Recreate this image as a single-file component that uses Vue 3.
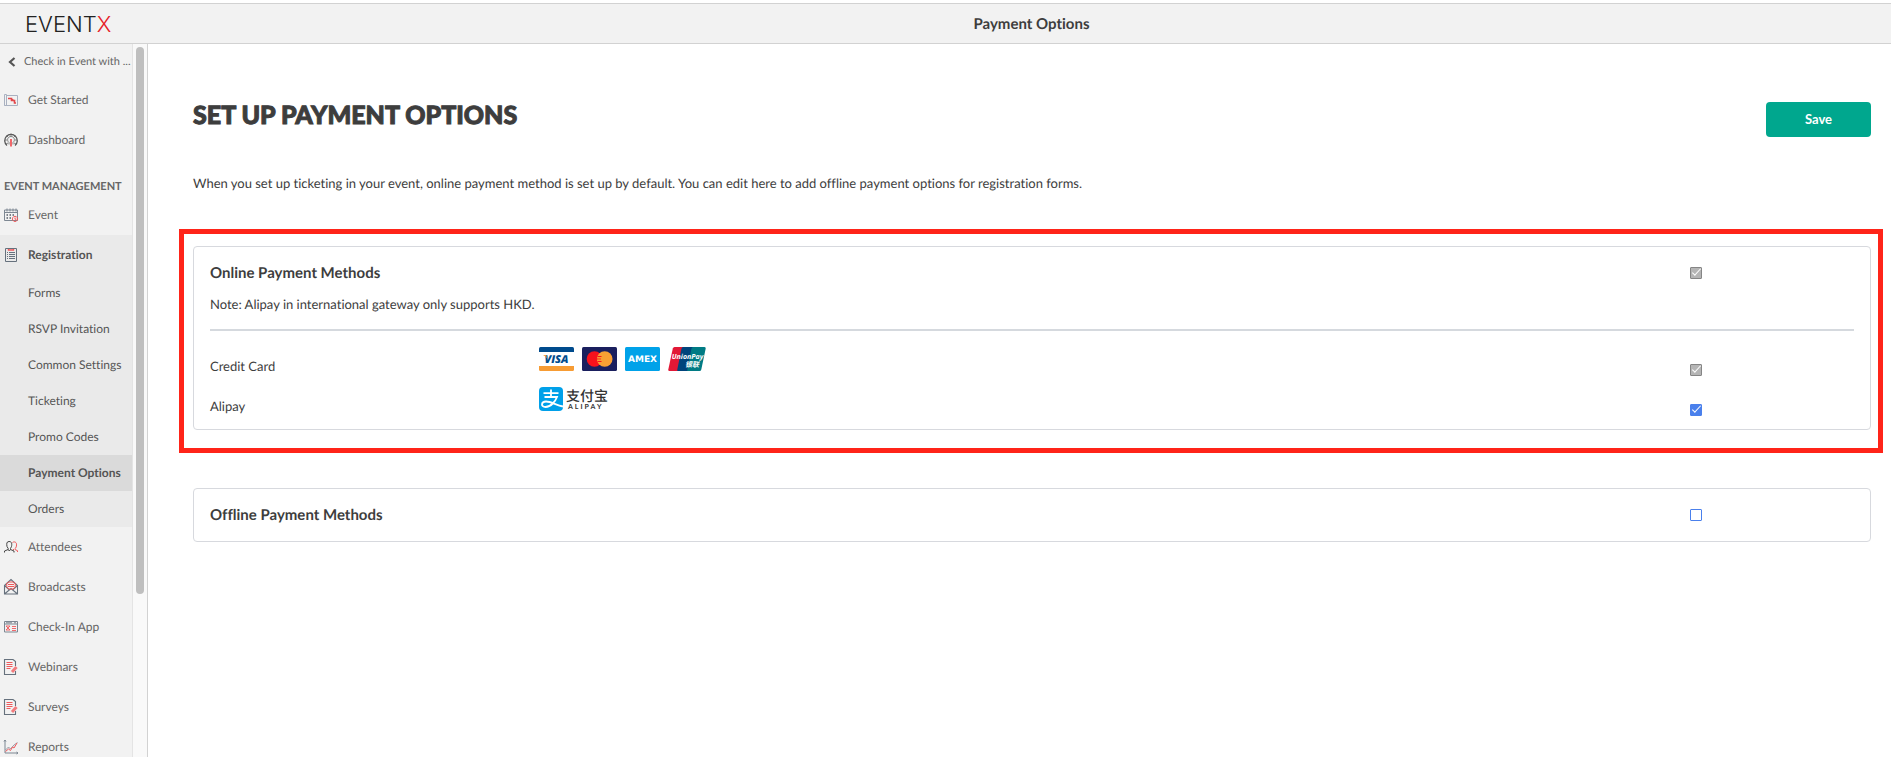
<script setup>
import { ref } from 'vue'

const credit = ref(true)
const online = ref(true)
const alipay = ref(true)
const offline = ref(false)

const topItems = [
  { icon: 'start', label: 'Get Started' },
  { icon: 'dash', label: 'Dashboard' },
]
const subItems = ['Forms', 'RSVP Invitation', 'Common Settings', 'Ticketing', 'Promo Codes', 'Payment Options', 'Orders']
const moreItems = [
  { icon: 'people', label: 'Attendees' },
  { icon: 'mail', label: 'Broadcasts' },
  { icon: 'app', label: 'Check-In App' },
  { icon: 'note', label: 'Webinars' },
  { icon: 'note', label: 'Surveys' },
  { icon: 'chart', label: 'Reports' },
]

const S = '#7d8792'
const R = '#f0595c'
const D = '#555'
const icons = {
  start: [
    { d: 'M.5 1.5h2v11h-2zM2.5 2.5h11v10h-13', c: '#a9b1c0' },
    { d: 'M4 5.500h3.500v2h3v2.500H12M8 6.500l3 2', c: '#e2474b', w: 1.6 },
  ],
  dash: [
    { d: 'M3 12.500A6.300 6.300 0 1 1 11 12.500', c: D, w: 1.3 },
    { d: 'M5 11.500V9.500C2.500 7.500 3.500 3.500 7 3.500s4.500 4 2 6v2M7 .5v2.500M1 7h2M11 7h2M2.500 2.500l1.500 1.500M11.500 2.500L10 4M2 11l2-1M12 11l-2-1', c: '#666', w: 0.8 },
    { d: 'M7 6v7.500', c: R, w: 1.8 },
  ],
  event: [
    { d: 'M.5 2h13v10.500H.5zM.5 4.500h13M3 .5v3M6 .5v3M9 .5v3M12 .5v3', c: S },
    { d: 'M2.500 7h1.500M5.500 7H7M8.500 7H10M2.500 10h1.500M5.500 10H7', c: '#555e68', w: 1.3 },
    { d: 'M11 8.300a2.600 2.600 0 1 0 .01 0zM11 9.500v1.700h1.500', c: R },
  ],
  form: [
    { d: 'M1.500.5h11v13h-11z', c: '#66717d' },
    { d: 'M3 4.500h1M5 4.500H11M3 6.500h1M5 6.500H11M3 8.500h1M5 8.500H11M3 10.500h1M5 10.500H11', c: '#66717d' },
    { d: 'M4.500 1v1h5V1M6 2h2', c: R, w: 1.4 },
  ],
  people: [
    { d: 'M8.500 2.500c2-1.500 4.500 0 4 2.500 0 1.500-.5 3-1.500 3.500v1l2.500 1.200v1.300M9 10l1-1', c: R },
    { d: 'M5 1.500C2.500 1.500 2.500 4 3 6.500l1.200 2v1L.5 11v1.500M5 1.500c3 0 3 2.500 2.500 5l-1 2v1L10 11v1.500M4.200 9.500L5.300 11l1.200-1.500', c: '#444' },
  ],
  mail: [
    { d: 'M.5 5.500L7-.5l6.500 6V14H.5zM.5 5.500L5 9.500M13.500 5.500L9 9.500M.5 14L7 8.500l6.500 5.500', c: '#66717d', w: 1.1 },
    { d: 'M3 7.500L2.500 3.500 5 2h4l2.500 1.500-.5 4-2 1.500H5zM4 4.500h6M4 6.500h6', c: R },
  ],
  app: [
    { d: 'M.5 1.500h13v10.500H.5zM.5 4h13M2 2.800h6M10 2.800h2', c: S },
    { d: 'M2 6l4 4M6 6l-4 4M2 6h4M2 10h4M8 6.500h4M8 8.500h4M8 10.500h4', c: R, w: 0.9 },
  ],
  note: [
    { d: 'M9-.500H.5v15h11V11M9-.500l2.500 2V6', c: '#66717d', w: 1.1 },
    { d: 'M2.500 2.500h6M2.500 4.500h6M2.500 6.500h6M2.500 8.500h4', c: R },
    { d: 'M8 12l4.500-5', c: '#f27b7e', w: 3 },
  ],
  chart: [
    { d: 'M1 0v13h13M0 1.500L1 0l1 1.500M12.500 12l1.500 1-1.500 1', c: S },
    { d: 'M1.500 10l3-3 2 2 3.500-4 3.500-2.500', c: S, w: 0.8 },
    { d: 'M1.500 11.500l3-2.500 2 1.500 2-3.500 1.500 1 3-5', c: R },
  ],
}
</script>

<template>
  <div class="page">
    <header class="topbar">
      <a class="logo" href="#" aria-label="EventX">EVENT<span>X</span></a>
      <div class="topbar-title">Payment Options</div>
    </header>

    <div class="body">
      <aside class="side">
        <nav class="nav">
          <a class="back" href="#">
            <svg class="chevron" width="8" height="10" viewBox="0 0 8 10"><path d="M6.500 1L2 5l4.500 4" fill="none" stroke="#555" stroke-width="2.200" /></svg>
            <span>Check in Event with ...</span>
          </a>
          <a v-for="i in topItems" :key="i.label" class="item" href="#">
            <svg class="ico" viewBox="0 0 14 14"><path v-for="(p, k) in icons[i.icon]" :key="k" :d="p.d" :stroke="p.c" :stroke-width="p.w || 1" /></svg>
            {{ i.label }}
          </a>
          <div class="group">EVENT MANAGEMENT</div>
          <a class="item" href="#">
            <svg class="ico" viewBox="0 0 14 14"><path v-for="(p, k) in icons.event" :key="k" :d="p.d" :stroke="p.c" :stroke-width="p.w || 1" /></svg>
            Event
          </a>
          <div class="open">
            <a class="item strong" href="#">
              <svg class="ico" viewBox="0 0 14 14"><path v-for="(p, k) in icons.form" :key="k" :d="p.d" :stroke="p.c" :stroke-width="p.w || 1" /></svg>
              Registration
            </a>
            <a v-for="s in subItems" :key="s" class="sub" :class="{ current: s === 'Payment Options' }" href="#">{{ s }}</a>
          </div>
          <a v-for="i in moreItems" :key="i.label" class="item" href="#">
            <svg class="ico" viewBox="0 0 14 14"><path v-for="(p, k) in icons[i.icon]" :key="k" :d="p.d" :stroke="p.c" :stroke-width="p.w || 1" /></svg>
            {{ i.label }}
          </a>
        </nav>
        <div class="track"><div class="thumb"></div></div>
      </aside>

      <main class="main">
        <div class="head">
          <h1>SET UP PAYMENT OPTIONS</h1>
          <button class="save" type="button">Save</button>
        </div>
        <p class="intro">When you set up ticketing in your event, online payment method is set up by default. You can edit here to add offline payment options for registration forms.</p>

        <div class="highlight">
          <section class="card">
            <div class="row">
              <label class="title" for="online">Online Payment Methods</label>
              <input id="online" v-model="online" type="checkbox" disabled />
            </div>
            <p class="note">Note: Alipay in international gateway only supports HKD.</p>
            <hr />
            <div class="method">
              <label for="credit">Credit Card</label>
              <div class="brands">
                <svg width="35" height="24" viewBox="0 0 35 24">
                  <rect width="35" height="24" rx="1.500" fill="#fff" />
                  <path d="M0 5V1.500Q0 0 1.500 0h32Q35 0 35 1.500V5z" fill="#004b8d" />
                  <path d="M0 19v3.500Q0 24 1.500 24h32q1.500 0 1.500-1.500V19z" fill="#f79c34" />
                  <text x="17.500" y="16" text-anchor="middle" class="visa">VISA</text>
                  <path d="M4 8h3l1.500 4Q7 9 4 8z" fill="#f79c34" />
                </svg>
                <svg width="35" height="24" viewBox="0 0 35 24">
                  <rect width="35" height="24" rx="1.500" fill="#1a1f5e" />
                  <circle cx="12.500" cy="12" r="7.800" fill="#f7121c" />
                  <circle cx="22.700" cy="12" r="7.800" fill="#f9a033" />
                  <path d="M15.500 9.500h4M15 12h4M15.500 14.500h4" stroke="#f7121c" stroke-width="1" />
                  <path d="M16 10.700h4M15.700 13.200h4" stroke="#f9a033" stroke-width="1" />
                </svg>
                <svg width="35" height="24" viewBox="0 0 35 24">
                  <rect width="35" height="24" rx="1.500" fill="#00a2e9" />
                  <text x="17.500" y="15" text-anchor="middle" class="amex">AMEX</text>
                </svg>
                <svg width="38" height="24" viewBox="0 0 38 24">
                  <path d="M6.500 0H16l-5 24H1.500Q0 24 .3 22.500L4.800 1.500Q5.200 0 6.500 0z" fill="#e21836" />
                  <path d="M15 0h11l-5 24H9.800Q9 24 9.300 22.500L13.500 1.500Q14 0 15 0z" fill="#00447c" />
                  <path d="M25 0h11.500Q38 0 37.700 1.500L33.300 22.500Q33 24 31.500 24H19.800Q19 24 19.300 22.500L23.500 1.500Q24 0 25 0z" fill="#007b84" />
                  <text x="19.500" y="12" text-anchor="middle" class="union">UnionPay</text>
                  <text x="24" y="20" text-anchor="middle" class="union-cn">银联</text>
                </svg>
              </div>
              <input id="credit" v-model="credit" type="checkbox" disabled />
            </div>
            <div class="method">
              <label for="alipay">Alipay</label>
              <div class="brands">
                <svg width="70" height="24" viewBox="0 0 70 24">
                  <rect width="24" height="24" rx="4" fill="#00a0e9" />
                  <path d="M4.500 6.200h15M12 2.500v7.500M5.500 10h12.500C16.500 14 12 20 6.500 20c-5 0-4.500-5.500.5-5.500 5 0 10 3.500 17 5" fill="none" stroke="#fff" stroke-width="1.800" />
                  <text x="27" y="14" class="ali-cn">支付宝</text>
                  <text x="29" y="22" class="ali-en">ALIPAY</text>
                </svg>
              </div>
              <input id="alipay" v-model="alipay" type="checkbox" />
            </div>
          </section>
        </div>

        <section class="card second">
          <div class="row">
            <label class="title" for="offline">Offline Payment Methods</label>
            <input id="offline" v-model="offline" type="checkbox" />
          </div>
        </section>
      </main>
    </div>
  </div>
</template>

<style>
body {
  background: #fff;
  overflow: hidden;
}
</style>

<style scoped>
.page {
  height: 100vh;
  display: flex;
  flex-direction: column;
  padding-top: 3px;
  box-sizing: border-box;
  font-family: Lato, "Noto Sans CJK SC", sans-serif;
  font-size: 13px;
  line-height: 20px;
  color: #3d3d3d;
  text-rendering: geometricPrecision;
  font-variant-ligatures: no-common-ligatures;
}
a {
  color: inherit;
  text-decoration: none;
}
.topbar {
  flex: none;
  height: 39px;
  display: grid;
  grid-template-columns: 1fr auto 1fr;
  align-items: center;
  background: #f2f2f2;
  border-top: 1px solid #d2d2d2;
  border-bottom: 1px solid #d2d2d2;
}
.logo {
  padding: 3px 0 0 25px;
  font-family: Inter, sans-serif;
  font-weight: 300;
  font-size: 22px;
  color: #222;
}
.logo span {
  color: #e62129;
}
.topbar-title {
  padding-left: 172px;
  font-size: 15px;
  font-weight: 700;
}
.body {
  flex: 1;
  min-height: 0;
  display: flex;
}
.side {
  flex: none;
  display: flex;
  overflow: hidden;
  border-right: 1px solid #d2d2d2;
}
.nav {
  width: 132px;
  background: #f2f2f2;
  font-size: 12px;
  color: #666;
  border-right: 1px solid #e4e4e4;
}
.track {
  width: 8px;
  padding: 3px 3px 0;
  background: #f9f9f9;
}
.thumb {
  height: 77%;
  border-radius: 4px;
  background: #bfbfbf;
}
.back {
  height: 36px;
  display: flex;
  align-items: center;
  gap: 8px;
  padding-left: 8px;
  font-size: 11px;
  white-space: nowrap;
}
.chevron {
  flex: none;
}
.item {
  height: 40px;
  display: flex;
  align-items: center;
  gap: 10px;
  padding-left: 4px;
}
.ico {
  width: 14px;
  height: 14px;
  fill: none;
  overflow: visible;
}
.group {
  height: 35px;
  padding: 17px 0 0 4px;
  box-sizing: border-box;
  font-weight: 700;
  font-size: 11px;
  white-space: nowrap;
}
.open {
  background: #eaeaea;
  color: #555;
}
.strong,
.current {
  font-weight: 700;
}
.sub {
  display: block;
  line-height: 36px;
  padding-left: 28px;
}
.current {
  background: #dadada;
}
.main {
  flex: 1;
  min-width: 0;
  padding: 58px 20px 0 45px;
}
.head {
  display: flex;
  justify-content: space-between;
  align-items: flex-start;
}
h1 {
  margin: 0;
  font-size: 25px;
  line-height: 26px;
  font-weight: 900;
  -webkit-text-stroke: 1px #3d3d3d;
}
.save {
  width: 105px;
  height: 35px;
  padding: 0 0 2px;
  border: 0;
  border-radius: 4px;
  background: #00a78e;
  color: #fff;
  font: 700 13px/20px Lato, sans-serif;
}
.intro {
  margin: 36px 0;
}
.highlight {
  margin: 0 -12px 35px -14px;
  padding: 12px 7px 18px 9px;
  border: 5px solid #ff2419;
}
.card {
  border: 1px solid #d7d9de;
  border-radius: 4px;
  padding: 16px 16px 2px;
}
.card.second {
  padding-bottom: 16px;
}
.row,
.method {
  display: grid;
  grid-template-columns: 20% 70% 10%;
}
.row {
  grid-template-columns: 90% 10%;
  align-items: center;
}
.title {
  font-size: 15px;
  font-weight: 700;
}
.note {
  margin: 11px 0 15px;
}
hr {
  height: 2px;
  margin: 0 0 16px;
  border: 0;
  background: #d5d9de;
}
.method {
  height: 40px;
}
.method label {
  padding-top: 9px;
}
.method input {
  margin-top: 17px;
}
.brands {
  display: flex;
  gap: 8px;
}
input {
  appearance: none;
  position: relative;
  width: 12px;
  height: 12px;
  margin: 0;
  border: 1px solid #4a80ec;
  border-radius: 1px;
  background: #fff;
}
input:checked {
  background: #4a80ec;
}
input:disabled {
  background: #b5b5b5;
  border-color: #858585;
}
input:checked::after {
  content: "";
  position: absolute;
  left: 1px;
  top: 1px;
  width: 8px;
  height: 3px;
  border-left: 1px solid #fff;
  border-bottom: 1px solid #fff;
  box-sizing: content-box;
  transform: rotate(-47deg);
}
.visa {
  font: italic 900 11px "Open Sans", sans-serif;
  fill: #004b8d;
}
.amex {
  font: 700 9px "DejaVu Sans", sans-serif;
  fill: #fff;
}
.union {
  font: italic 700 7px "Open Sans", sans-serif;
  fill: #fff;
}
.union-cn {
  font: italic 700 7px "Noto Sans CJK SC", sans-serif;
  fill: #fff;
}
.ali-cn {
  font: 500 14px "Noto Sans CJK SC", sans-serif;
  fill: #333;
}
.ali-en {
  font: 700 7px Lato, sans-serif;
  letter-spacing: 2px;
  fill: #333;
}
</style>
